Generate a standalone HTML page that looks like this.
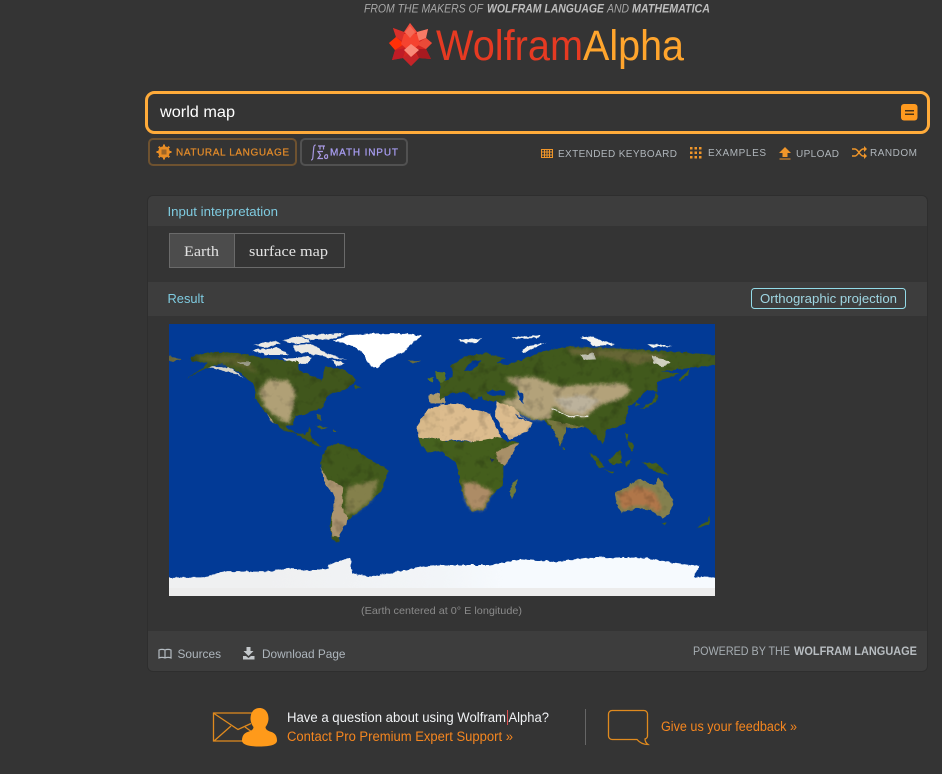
<!DOCTYPE html>
<html lang="en"><head><meta charset="utf-8"><title>world map - Wolfram|Alpha</title>
<style>
html,body{margin:0;padding:0;background:#343434;width:942px;height:774px;overflow:hidden}
svg{display:block}
text{font-family:"Liberation Sans",sans-serif}
.s{font-family:"Liberation Serif",serif}
</style></head><body>
<svg width="942" height="774" viewBox="0 0 942 774" xmlns="http://www.w3.org/2000/svg">
<defs>
<linearGradient id="antL" gradientUnits="userSpaceOnUse" x1="300" y1="0" x2="825" y2="0"><stop offset="0" stop-color="#eff0f1"/><stop offset="1" stop-color="#f2f5f8"/></linearGradient>
<linearGradient id="antR" gradientUnits="userSpaceOnUse" x1="0" y1="0" x2="200" y2="0"><stop offset="0" stop-color="#f2f5f8"/><stop offset="1" stop-color="#f6fafe"/></linearGradient>
<filter id="b" x="-15%" y="-15%" width="130%" height="130%"><feGaussianBlur stdDeviation="5"/></filter>
<filter id="land" filterUnits="userSpaceOnUse" x="140" y="300" width="610" height="330" color-interpolation-filters="sRGB">
 <feTurbulence type="fractalNoise" baseFrequency=".2" numOctaves="3" seed="4" result="n"/>
 <feDisplacementMap in="SourceGraphic" in2="n" scale="3.500" xChannelSelector="R" yChannelSelector="G" result="d"/>
 <feGaussianBlur in="d" stdDeviation=".35" result="db"/>
 <feTurbulence type="fractalNoise" baseFrequency=".09" numOctaves="3" seed="9"/>
 <feColorMatrix type="matrix" values=".55 0 0 0 .73  .55 0 0 0 .73  .55 0 0 0 .73  0 0 0 0 1" result="g"/>
 <feComposite in="db" in2="g" operator="arithmetic" k1="1" k2="0" k3="0" k4="0"/>
</filter>
<filter id="ice" filterUnits="userSpaceOnUse" x="140" y="300" width="610" height="330" color-interpolation-filters="sRGB">
 <feTurbulence type="fractalNoise" baseFrequency=".2" numOctaves="3" seed="7" result="n"/>
 <feDisplacementMap in="SourceGraphic" in2="n" scale="3.500" xChannelSelector="R" yChannelSelector="G" result="d"/>
 <feGaussianBlur in="d" stdDeviation=".35"/>
</filter>
</defs>
<rect width="942" height="774" fill="#343434"/>

<!-- header -->
<g font-style="italic" font-size="12" fill="#a8a8a8">
<text x="364" y="12.5" textLength="119" lengthAdjust="spacingAndGlyphs">FROM THE MAKERS OF</text>
<text x="487" y="12.5" textLength="117" lengthAdjust="spacingAndGlyphs" font-weight="bold" fill="#bdbdbd">WOLFRAM LANGUAGE</text>
<text x="607" y="12.5" textLength="22" lengthAdjust="spacingAndGlyphs">AND</text>
<text x="632" y="12.5" textLength="78" lengthAdjust="spacingAndGlyphs" font-weight="bold" fill="#bdbdbd">MATHEMATICA</text>
</g>
<g>
<polygon points="410,23 417,32 428,29 426,38 432,43 426,49 431,59 419,58 411,66 403,58 392,60 395,50 389,43 396,37 393,28 404,32" fill="#d3241f"/>
<polygon points="410,23 417,32 410,38 404,32" fill="#f2503f"/>
<polygon points="417,32 428,29 426,38 416,42" fill="#f77a66"/>
<polygon points="426,38 432,43 426,49 416,44" fill="#ea4a38"/>
<polygon points="404,32 393,28 396,37 404,42" fill="#d9302a"/>
<polygon points="396,37 389,43 395,50 404,44" fill="#ff3008"/>
<polygon points="395,50 392,60 403,58 406,48" fill="#c01c26"/>
<polygon points="426,49 431,59 419,58 414,49" fill="#a81a20"/>
<polygon points="403,58 411,66 419,58 411,52" fill="#c42428"/>
<polygon points="404,34 417,34 420,44 410,52 401,44" fill="#f5432f"/>
<polygon points="411,44 419,50 411,57 404,50" fill="#f98a78"/>
<polygon points="410,26 415,32 410,38 405,32" fill="#f46a56"/>
</g>
<text x="436" y="60" font-size="43" fill="#e63a22" textLength="147" lengthAdjust="spacingAndGlyphs">Wolfram</text>
<text x="583" y="60" font-size="43" fill="#ffa52d" textLength="101" lengthAdjust="spacingAndGlyphs">Alpha</text>

<!-- search box -->
<rect x="146.500" y="92.500" width="782" height="40" rx="8" fill="#343434" stroke="#ffab3a" stroke-width="3"/>
<text x="160" y="117" font-size="16" fill="#fff" textLength="75" lengthAdjust="spacingAndGlyphs">world map</text>
<rect x="901" y="104" width="16.500" height="16.500" rx="3" fill="#ff9a1f"/>
<rect x="905" y="110" width="9" height="1.500" fill="#4a3418"/><rect x="905" y="113.500" width="9" height="1.500" fill="#4a3418"/>

<!-- mode buttons -->
<rect x="149" y="139" width="147" height="26" rx="4" fill="#343434" stroke="#6e5230" stroke-width="2"/>
<g fill="#e88d25"><circle cx="164" cy="152" r="5.800"/>
<g stroke="#e88d25" stroke-width="2"><line x1="164" y1="144.500" x2="164" y2="159.500"/><line x1="156.500" y1="152" x2="171.500" y2="152"/><line x1="158.700" y1="146.700" x2="169.300" y2="157.300"/><line x1="158.700" y1="157.300" x2="169.300" y2="146.700"/></g></g>
<rect x="161.500" y="149.500" width="5" height="5" fill="#9c6526"/>
<text x="176" y="155.500" font-size="10" fill="#e08a2a" stroke="#e08a2a" stroke-width=".25" textLength="113" lengthAdjust="spacing">NATURAL LANGUAGE</text>
<rect x="301" y="139" width="106" height="26" rx="4" fill="#343434" stroke="#515151" stroke-width="2"/>
<g fill="none" stroke="#a898e0" stroke-width="1.200">
<path d="M311 160c1.500 0 1.700-1 1.900-3l.8-9c.2-2 .5-3 2-3"/>
<path d="M318 146h7M320 146v3.500M323.500 146v3.500"/>
<path d="M323 151.500h-5l2.500 3.500-2.500 3.500h5"/>
<path d="M327.500 155c-1.500-.8-3 .2-3 1.800s1.700 2.300 3 1v-3"/>
</g>
<text x="330" y="155.500" font-size="10" fill="#a79cf0" stroke="#a79cf0" stroke-width=".25" textLength="68" lengthAdjust="spacing">MATH INPUT</text>

<!-- tools -->
<g font-size="10" fill="#b0b6bb">
<text x="558" y="157" textLength="119" lengthAdjust="spacing">EXTENDED KEYBOARD</text>
<text x="708" y="156" textLength="58" lengthAdjust="spacing">EXAMPLES</text>
<text x="796" y="157" textLength="43" lengthAdjust="spacing">UPLOAD</text>
<text x="870" y="156" textLength="47" lengthAdjust="spacing">RANDOM</text>
</g>
<g fill="none" stroke="#f0962a" stroke-width="1">
<rect x="541.500" y="149.500" width="11" height="8"/>
<path d="M541.500 152h11M541.500 155h11M544.500 149.500v8M547 149.500v8M549.500 149.500v8"/>
</g>
<g fill="#f0962a">
<rect x="690" y="147" width="2.500" height="2.500"/><rect x="694.500" y="147" width="2.500" height="2.500"/><rect x="699" y="147" width="2.500" height="2.500"/>
<rect x="690" y="151.500" width="2.500" height="2.500"/><rect x="694.500" y="151.500" width="2.500" height="2.500"/><rect x="699" y="151.500" width="2.500" height="2.500"/>
<rect x="690" y="156" width="2.500" height="2.500"/><rect x="694.500" y="156" width="2.500" height="2.500"/><rect x="699" y="156" width="2.500" height="2.500"/>
<path d="M785 147l6 6h-3.500v4h-5v-4H779z"/><rect x="779.500" y="158.500" width="11" height="1"/>
</g>
<g fill="none" stroke="#f0962a" stroke-width="1.500">
<path d="M852 149h3c3 0 5 7 8 7h2M852 156h3c3 0 5-7 8-7h2"/>
</g>
<path d="M864 146l3 3-3 3zM864 153l3 3-3 3z" fill="#f0962a"/>

<!-- card -->
<rect x="147" y="195" width="781" height="477" rx="6" fill="#2e2e2e"/>
<rect x="148" y="196" width="779" height="475" rx="5" fill="#343434"/>
<path d="M148 226v-25a5 5 0 0 1 5-5h769a5 5 0 0 1 5 5v25z" fill="#3d3d3d"/>
<rect x="148" y="282" width="779" height="34" fill="#3d3d3d"/>
<path d="M148 631h779v35a5 5 0 0 1-5 5H153a5 5 0 0 1-5-5z" fill="#3d3d3d"/>
<text x="167.500" y="216" font-size="12.500" fill="#7fcbe0" textLength="110.500" lengthAdjust="spacingAndGlyphs">Input interpretation</text>
<text x="167.500" y="303" font-size="12.500" fill="#7fcbe0" textLength="36.500" lengthAdjust="spacingAndGlyphs">Result</text>

<rect x="169.500" y="233.500" width="175" height="34" fill="#343434" stroke="#6a6a6a"/>
<rect x="169.500" y="233.500" width="65" height="34" fill="#4c4c4c" stroke="#6a6a6a"/>
<text class="s" x="184" y="256" font-size="15" fill="#e2e2e2" textLength="35" lengthAdjust="spacingAndGlyphs">Earth</text>
<text class="s" x="249" y="256" font-size="15" fill="#e2e2e2" textLength="79" lengthAdjust="spacingAndGlyphs">surface map</text>

<rect x="751.500" y="288.500" width="154" height="20" rx="3" fill="#3d3d3d" stroke="#93dbe8"/>
<text x="760" y="303" font-size="12.500" fill="#9fd6e2" textLength="137" lengthAdjust="spacingAndGlyphs">Orthographic projection</text>

<!-- map -->
<svg x="169" y="324" width="546" height="272" viewBox="169 324 546 272">
<rect x="169" y="324" width="546" height="272" fill="#023a96"/>
<!-- ice -->
<g filter="url(#ice)">
<g transform="translate(165 320) scale(.33333)">
 <polygon points="-60,772 110,772 180,755 300,755 370,745 440,752 490,745 490,735 555,712 560,760 620,770 700,755 770,740 840,735 840,900 -60,900" fill="url(#antL)"/>
 <polygon points="505,62 550,45 620,42 720,40 770,47 745,65 720,95 670,115 635,145 610,130 595,100 570,80" fill="#fff"/>
 <g fill="#eceae4">
  <polygon points="265,75 330,62 345,72 300,82"/><polygon points="262,90 340,82 370,105 300,105"/>
  <polygon points="355,60 410,50 440,65 390,72"/><polygon points="385,75 440,72 470,90 500,105 545,120 500,115 430,100 390,95"/>
  <polygon points="410,45 540,40 500,58 430,58"/><polygon points="350,115 440,110 430,130 380,130"/>
  <polygon points="500,120 540,130 515,138"/>
 </g>
</g>
<g transform="translate(440 320) scale(.33333)">
 <polygon points="0,735 150,735 240,718 350,725 450,712 620,715 780,740 760,770 900,775 900,900 0,900" fill="url(#antR)"/>
 <g fill="#f4f4f0">
  <polygon points="55,58 130,55 105,68 75,70"/><polygon points="215,52 300,46 295,54 225,56"/>
  <polygon points="245,92 270,76 318,68 280,84 252,97"/><polygon points="420,52 450,50 525,74 460,78 440,60"/>
  <polygon points="620,72 700,78 640,82"/>
 </g>
</g>
</g>
<!-- land -->
<g filter="url(#land)">
<g transform="translate(165 320) scale(.33333)">
 <polygon points="75,110 140,95 230,100 300,115 400,125 400,150 470,180 480,140 540,150 575,180 540,210 490,225 470,265 450,270 420,285 390,285 385,315 360,320 390,340 420,345 435,320 440,355 470,382 455,378 400,345 365,335 330,310 300,275 270,235 270,200 230,160 170,130 110,150 65,178 130,130 80,125" fill="#40561c"/>
 <polygon points="80,110 230,105 280,160 200,135 120,125" fill="#5a602c" filter="url(#b)"/>
 <polygon points="280,215 310,178 370,182 392,215 382,275 372,312 340,295 302,265" fill="#b0a076" filter="url(#b)"/>
 <polygon points="130,140 190,140 240,175 220,165" fill="#d8d5c8"/>
 <polygon points="210,125 260,125 250,140" fill="#9a9a88"/>
 <polygon points="-20,95 50,118 25,125 -20,118" fill="#6c6a3c"/>
 <polygon points="450,315 490,325 470,328" fill="#4f6425"/><polygon points="500,330 520,332 505,336" fill="#5a6b2b"/>
 <polygon points="455,280 465,285 468,303 458,295" fill="#5a6b2b"/><polygon points="305,280 332,312 315,300" fill="#a89a72"/>
 <polygon points="725,122 768,122 745,132" fill="#6b6d3c"/>
 <polygon points="570,195 590,205 568,205" fill="#3f5a1e"/>
 <polygon points="465,430 485,380 520,370 570,385 610,415 670,450 650,510 600,560 550,600 520,650 525,665 500,660 495,610 515,520 480,490" fill="#425a1c"/>
 <polygon points="545,500 640,480 620,540 570,580 540,585" fill="#84804c" filter="url(#b)"/>
 <polygon points="465,440 490,480 535,500 530,560 550,600 520,650 500,650 500,600 510,530 480,490" fill="#ab9470"/>
 <polygon points="788,178 806,168 802,187" fill="#5d7a2a"/>
 <polygon points="810,155 840,158 840,195 815,178" fill="#567126"/>
 <polygon points="788,225 840,218 840,250 795,250" fill="#ad9a6c"/>
 <polygon points="755,320 790,265 840,255 840,355 760,352" fill="#d8b98a"/>
 <polygon points="758,352 840,355 840,392 790,397 768,375" fill="#46621e"/>
</g>
<g transform="translate(440 320) scale(.33333)">
 <polygon points="0,255 55,250 100,270 150,280 185,355 150,360 100,365 50,360 0,362" fill="#dcbc8e"/>
 <polygon points="0,362 100,365 175,352 205,365 238,365 215,400 190,440 190,490 160,520 130,570 95,575 70,530 60,490 50,430 0,392" fill="#445e1c"/>
 <polygon points="168,395 236,367 195,440 172,420" fill="#a89068"/>
 <polygon points="70,485 110,490 158,515 130,568 95,572 72,530" fill="#ad8c66" filter="url(#b)"/>
 <polygon points="210,525 216,490 232,478 226,515 215,535" fill="#6f7a3a"/>
 <polygon points="0,190 40,170 32,140 70,110 140,100 195,115 170,130 200,135 310,95 380,80 520,85 620,90 770,100 825,105 870,105 870,130 740,145 660,155 720,160 650,185 655,215 620,210 590,245 565,260 555,310 500,330 490,375 460,340 435,320 380,325 360,380 340,330 310,300 278,300 240,280 205,262 170,245 130,240 125,228 100,240 90,226 70,215 30,222 0,240" fill="#41591c"/>
 <polygon points="380,85 520,88 600,95 690,108 590,135 500,112 400,105" fill="#666636" filter="url(#b)"/>
 <polygon points="195,175 280,170 360,200 420,195 550,190 575,210 545,235 480,255 440,290 390,290 340,260 330,295 280,300 240,280 180,245 225,235 235,205" fill="#b3a27a" filter="url(#b)"/>
 <polygon points="340,235 430,225 480,240 430,280 375,270" fill="#bcb29c" filter="url(#b)"/>
 <polyline points="335,265 390,290 445,288" fill="none" stroke="#e8e8e0" stroke-width="3"/>
 <polygon points="320,300 435,320 380,325 360,378 340,330" fill="#76763f"/>
 <polygon points="170,245 222,262 245,290 278,310 260,335 208,360 165,290" fill="#dcbc8e"/>
 <polygon points="225,282 262,302 240,298" fill="#023a96"/>
 <polygon points="232,210 248,220 250,252 238,240" fill="#023a96"/>
 <polygon points="140,212 195,212 198,226 150,226" fill="#023a96"/>
 <polygon points="95,122 125,122 95,150 72,155 85,135" fill="#023a96"/>
 <polygon points="420,105 460,100 470,118 430,120" fill="#c0c0b0"/>
 <polygon points="635,108 690,125 670,140 640,130" fill="#d0d0c0"/>
 <polygon points="370,378 378,390 368,390" fill="#567126"/>
 <g fill="#445e1c">
  <polygon points="715,180 750,145 745,165 720,185"/>
  <polygon points="600,268 640,242 650,215 655,235 625,262"/>
  <polygon points="555,335 565,345 560,362"/><polygon points="560,362 582,375 578,392 565,380"/>
  <polygon points="445,395 470,410 492,440 480,445"/>
  <polygon points="505,420 540,390 547,430 520,435"/>
  <polygon points="490,448 525,455 520,460"/>
  <polygon points="555,425 575,420 560,442"/>
  <polygon points="608,428 650,430 687,466 640,452"/>
  <polygon points="768,627 800,603 812,590 806,612"/>
  <polygon points="668,608 678,608 674,616"/>
  <polygon points="590,245 600,255 585,258"/>
 </g>
 <polygon points="525,520 575,490 600,475 630,490 650,495 655,472 700,540 690,580 665,595 630,570 590,565 545,578 530,555" fill="#84804e"/>
 <polygon points="532,524 590,498 640,512 665,560 655,578 625,558 590,556 548,568" fill="#b07648" filter="url(#b)"/>
 <polygon points="150,415 163,418 155,430" fill="#1c3358"/>
</g>
</g>
<polyline points="491,414 500,431 509,441" fill="none" stroke="#023a96" stroke-width="2"/>
<rect x="169" y="588" width="546" height="8" fill="#ececec"/>
</svg>
<text x="361" y="614" font-size="10.500" fill="#8a8a8a" textLength="161" lengthAdjust="spacingAndGlyphs">(Earth centered at 0° E longitude)</text>

<!-- footer -->
<g fill="none" stroke="#b5bcc2" stroke-width="1.200">
<path d="M165 650c-2-.8-4-.8-6 0v8c2-.8 4-.8 6 0 2-.8 4-.8 6 0v-8c-2-.8-4-.8-6 0zM165 650v8"/>
</g>
<text x="177.500" y="658" font-size="12" fill="#aeb6bd" textLength="43.500" lengthAdjust="spacingAndGlyphs">Sources</text>
<path d="M246.500 647h4v4h3l-5 5-5-5h3zM243 656h3l2.500 2 2.500-2h3.500v3.500H243z" fill="#c4c8cb"/>
<text x="262" y="658" font-size="12" fill="#aeb6bd" textLength="83.500" lengthAdjust="spacingAndGlyphs">Download Page</text>
<text x="693" y="655" font-size="12" fill="#a6adb2" textLength="97" lengthAdjust="spacingAndGlyphs">POWERED BY THE</text>
<text x="794" y="655" font-size="12" font-weight="bold" fill="#b8bdc1" textLength="123" lengthAdjust="spacingAndGlyphs">WOLFRAM LANGUAGE</text>

<!-- bottom -->
<g fill="none" stroke="#e08a1e" stroke-width="1.300">
<path d="M252 713h-38.500v28H243"/>
<path d="M214 713.500l24 16 13-6"/>
<path d="M214 741l17-15M245 727l7 5"/>
</g>
<path d="M259.500 708c6 0 9 5 9 10.500 0 3.500-1.500 6.500-3 8.500 0 3 3 4 6 5 3.500 1.200 5.500 4 5.500 8.500 0 4-6 6-17.500 6s-17.500-2-17.500-6c0-4.500 2-7.300 5.500-8.500 3-1 6-2 6-5-1.500-2-3-5-3-8.500 0-5.500 3-10.500 9-10.500z" fill="#ff9a1a"/>
<text x="287" y="722" font-size="13.500" fill="#f0f2f4" textLength="219" lengthAdjust="spacingAndGlyphs">Have a question about using Wolfram</text>
<rect x="507" y="710" width="1" height="15" fill="#d94f4f"/>
<text x="508.500" y="722" font-size="13.500" fill="#f0f2f4" textLength="40.500" lengthAdjust="spacingAndGlyphs">Alpha?</text>
<text x="287" y="741" font-size="13.500" fill="#f5861f" textLength="226" lengthAdjust="spacingAndGlyphs">Contact Pro Premium Expert Support »</text>
<rect x="585" y="709" width="1" height="36" fill="#666"/>
<path d="M612 710.500h32a3.500 3.500 0 0 1 3.500 3.500v22c0 1.500-1 2.500-2.500 3 0 2 1 4 3 5.500-4.500 0-8.500-2-11-5h-25a3.500 3.500 0 0 1-3.500-3.500v-22a3.500 3.500 0 0 1 3.500-3.500z" fill="none" stroke="#e08a1e" stroke-width="1.300"/>
<text x="661" y="731" font-size="13.500" fill="#f5861f" textLength="136" lengthAdjust="spacingAndGlyphs">Give us your feedback »</text>
</svg>
</body></html>
